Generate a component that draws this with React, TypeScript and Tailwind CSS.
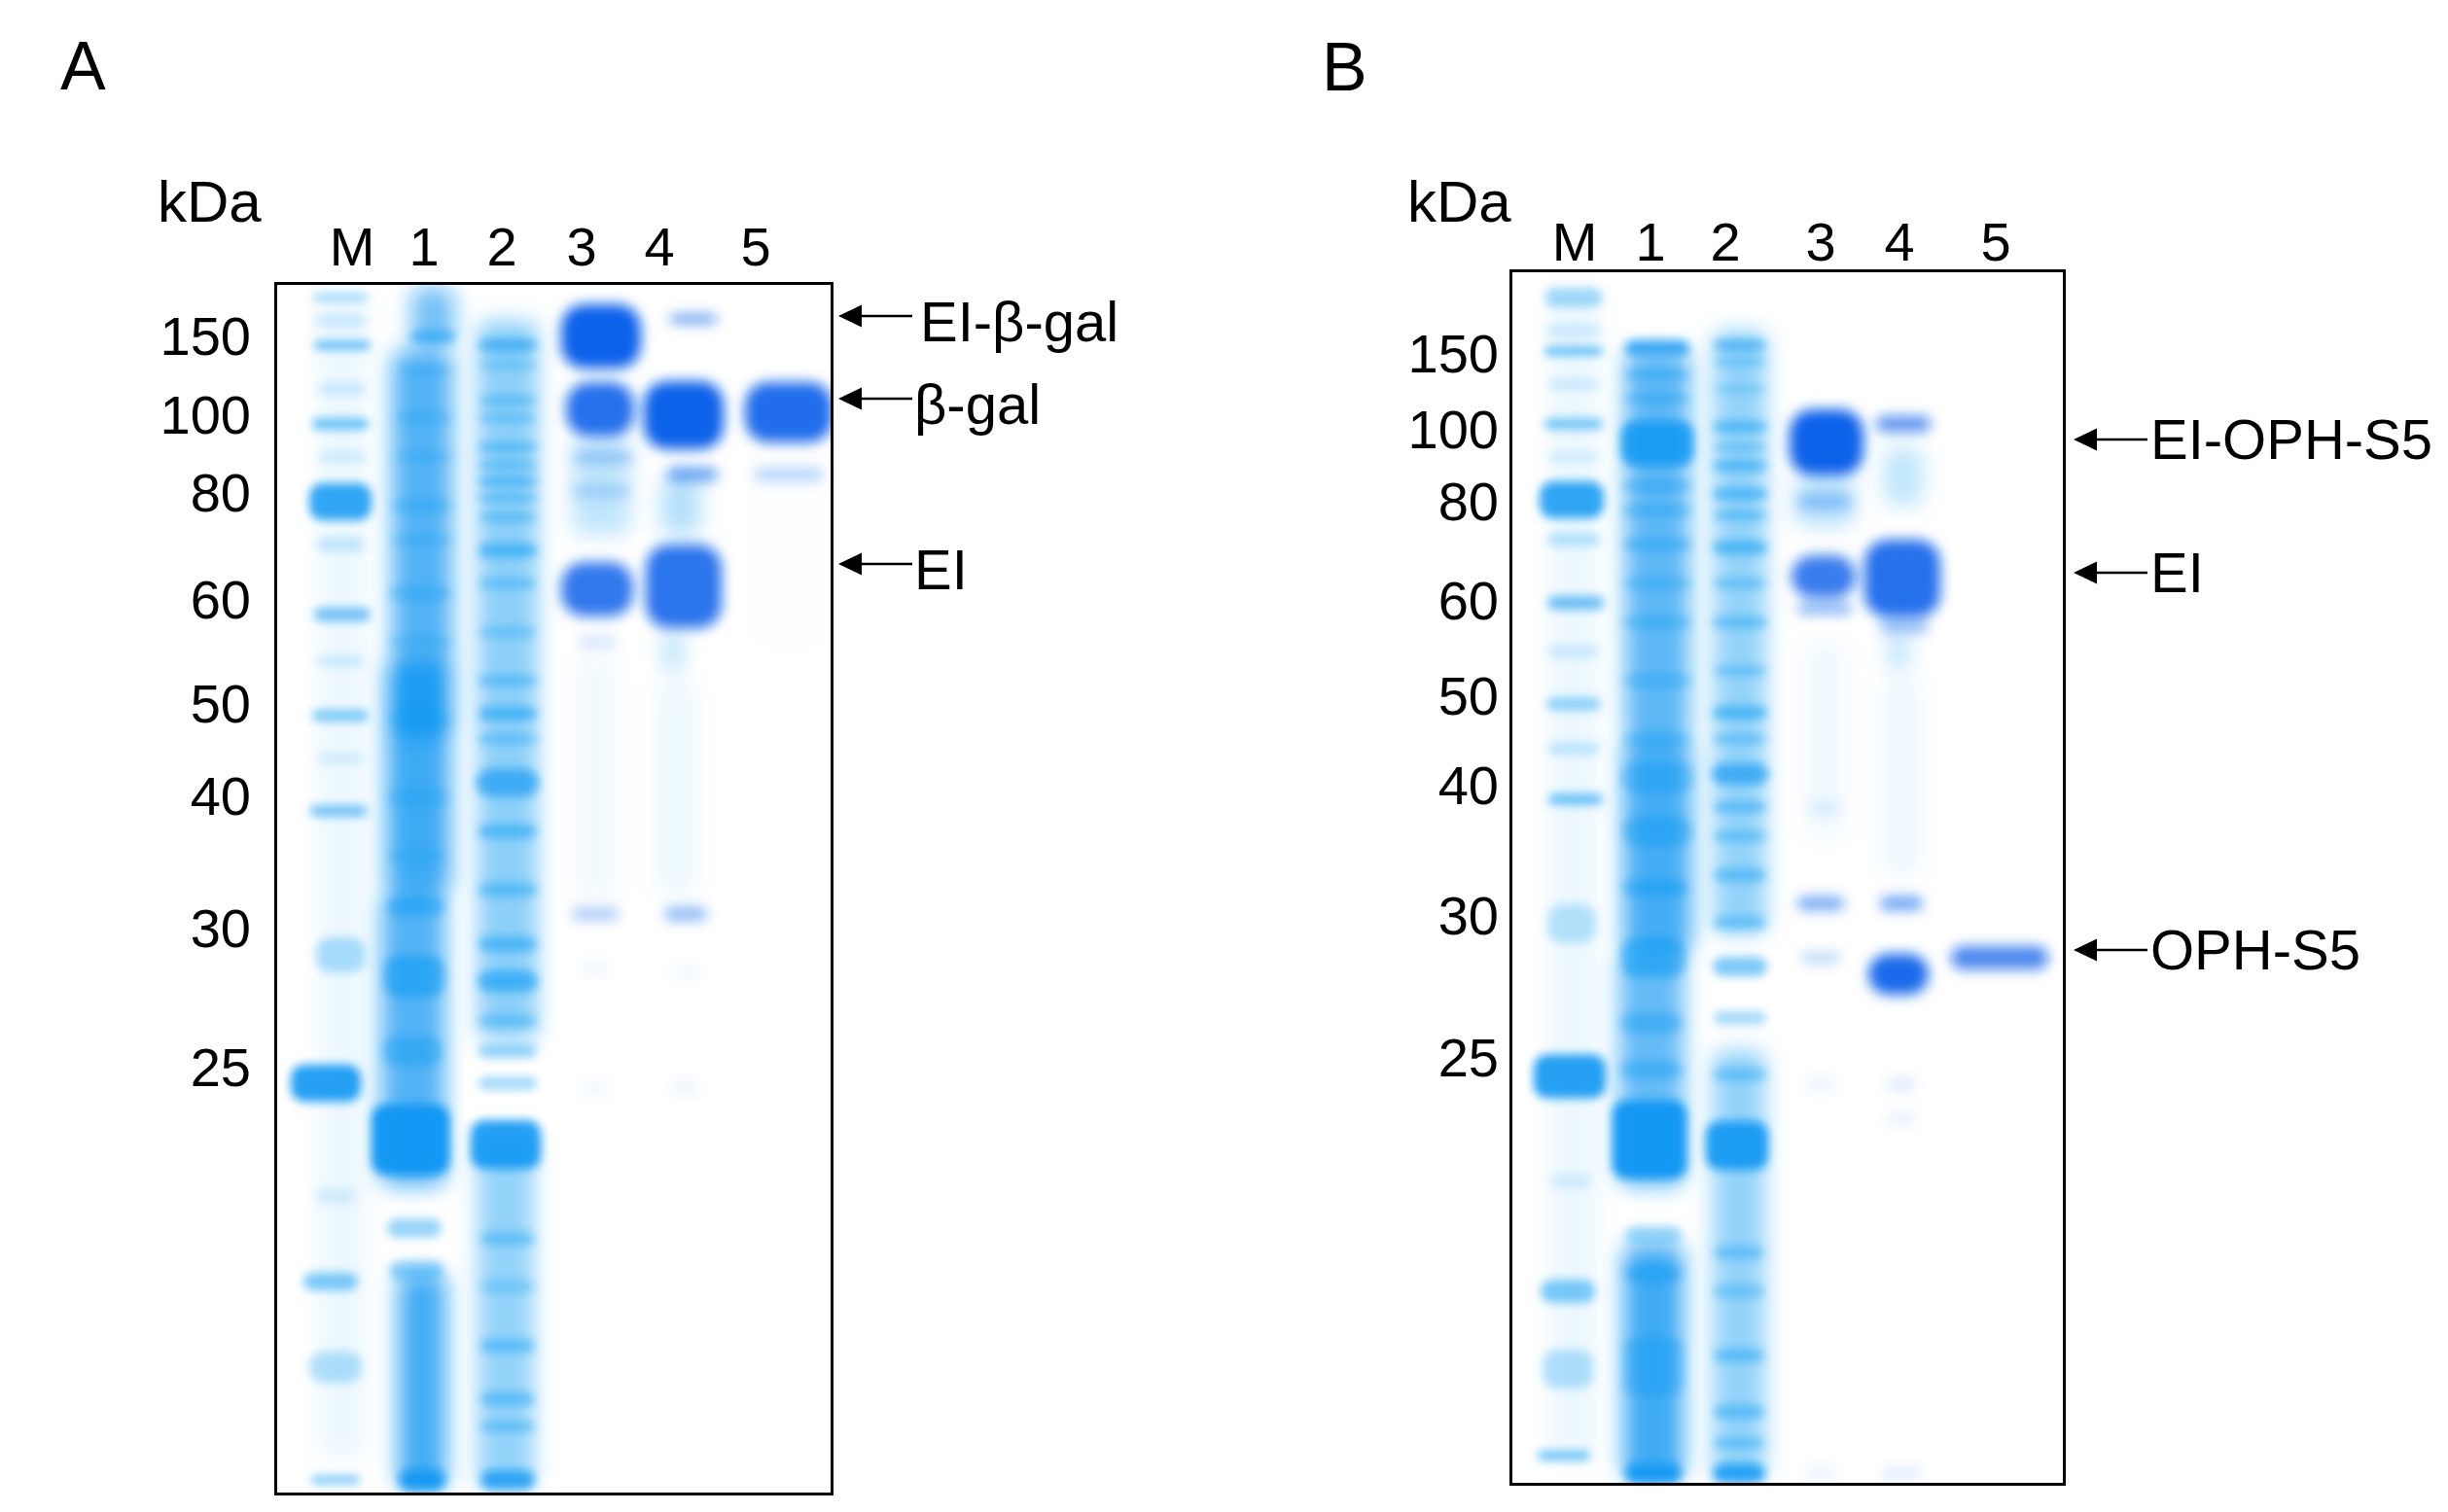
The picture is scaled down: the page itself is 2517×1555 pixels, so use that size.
import type { ReactNode } from 'react';

// [cx, cy, w, h, opacity] in page pixels
type Band = [number, number, number, number, number];

const LIGHT = '#0b96f2';
const DEEP = '#0a62ea';

type Tick = { label: string; top: number };
type Lane = { label: string; left: number };
type Arrow = { label: string; top: number; gap: string };

type GelData = {
  x: number;
  y: number;
  w: number;
  h: number;
  smear: Band[];
  light: Band[];
  deep: Band[];
};

const gelA: GelData = {
  x: 282,
  y: 290,
  w: 575,
  h: 1248,
  smear: [
    [352, 900, 50, 1200, 0.07],
    [445, 325, 44, 60, 0.6],
    [434, 560, 62, 400, 0.72],
    [430, 800, 66, 240, 0.8],
    [425, 1070, 66, 300, 0.72],
    [434, 1420, 50, 220, 0.78],
    [522, 700, 62, 740, 0.45],
    [520, 1350, 58, 360, 0.42],
    [618, 500, 60, 100, 0.25],
    [612, 800, 40, 250, 0.05],
    [700, 520, 40, 60, 0.3],
    [695, 810, 40, 220, 0.07],
    [692, 670, 20, 40, 0.3],
    [811, 560, 60, 200, 0.015],
  ],
  light: [
    [350, 306, 56, 8, 0.35], [350, 330, 54, 14, 0.15], [352, 355, 58, 10, 0.55], [352, 400, 50, 14, 0.15],
    [350, 436, 58, 12, 0.55], [352, 470, 50, 14, 0.12], [350, 516, 64, 38, 0.85], [350, 560, 50, 14, 0.2],
    [352, 632, 58, 13, 0.6], [350, 680, 50, 12, 0.15], [350, 736, 58, 13, 0.45], [350, 780, 50, 12, 0.12],
    [348, 834, 58, 11, 0.6], [350, 982, 50, 36, 0.3], [335, 1114, 72, 38, 0.9], [345, 1230, 44, 16, 0.12],
    [340, 1318, 56, 18, 0.5], [345, 1406, 54, 32, 0.28], [345, 1522, 50, 9, 0.5],

    [445, 346, 46, 14, 0.5], [440, 380, 50, 10, 0.2], [436, 430, 58, 14, 0.2], [436, 470, 60, 10, 0.2],
    [434, 520, 62, 14, 0.25], [434, 555, 62, 12, 0.2], [432, 610, 64, 16, 0.25], [432, 660, 64, 14, 0.2],
    [432, 740, 64, 20, 0.2], [430, 820, 64, 20, 0.2], [430, 880, 60, 12, 0.2], [428, 932, 60, 20, 0.4],
    [426, 1004, 62, 42, 0.5], [424, 1081, 62, 30, 0.35], [422, 1172, 80, 72, 0.95], [426, 1263, 56, 20, 0.4],
    [428, 1307, 56, 20, 0.4], [434, 1522, 48, 22, 0.9],

    [522, 355, 58, 12, 0.6], [522, 375, 56, 8, 0.3], [522, 412, 58, 10, 0.35], [522, 430, 58, 8, 0.35],
    [522, 460, 60, 10, 0.4], [522, 478, 60, 8, 0.4], [522, 495, 60, 10, 0.45], [522, 512, 60, 8, 0.4],
    [522, 532, 58, 10, 0.35], [522, 566, 60, 14, 0.5], [522, 600, 58, 10, 0.35], [522, 650, 58, 10, 0.3],
    [522, 700, 60, 12, 0.35], [522, 734, 60, 14, 0.5], [522, 760, 60, 10, 0.35], [522, 805, 64, 28, 0.65],
    [522, 855, 60, 14, 0.45], [522, 915, 60, 14, 0.4], [522, 971, 60, 16, 0.45], [522, 1009, 62, 22, 0.55],
    [522, 1050, 60, 12, 0.35], [522, 1081, 60, 14, 0.4], [522, 1114, 60, 14, 0.35], [520, 1177, 72, 50, 0.9],
    [522, 1274, 56, 14, 0.35], [522, 1323, 56, 14, 0.25], [522, 1384, 56, 14, 0.4], [522, 1439, 56, 14, 0.4],
    [522, 1467, 56, 12, 0.35], [522, 1522, 56, 20, 0.8],
  ],
  deep: [
    [618, 346, 82, 66, 1], [617, 421, 70, 56, 0.9], [620, 470, 60, 12, 0.3], [618, 505, 60, 10, 0.25],
    [614, 606, 74, 56, 0.85], [614, 660, 40, 14, 0.15], [612, 940, 48, 12, 0.35], [612, 995, 30, 10, 0.08],
    [612, 1119, 30, 10, 0.08],

    [713, 328, 48, 9, 0.65], [703, 427, 82, 70, 1], [712, 488, 52, 14, 0.6], [703, 603, 78, 86, 0.88],
    [705, 940, 44, 14, 0.45], [705, 1000, 26, 10, 0.08], [705, 1119, 26, 10, 0.1],

    [811, 424, 90, 62, 0.92], [811, 488, 70, 12, 0.3],
  ],
};

const gelB: GelData = {
  x: 1552,
  y: 277,
  w: 572,
  h: 1251,
  smear: [
    [1618, 900, 50, 1200, 0.07],
    [1704, 560, 66, 400, 0.68],
    [1704, 870, 70, 220, 0.78],
    [1698, 1100, 66, 240, 0.65],
    [1700, 1400, 62, 240, 0.8],
    [1789, 650, 54, 620, 0.42],
    [1788, 1300, 54, 440, 0.42],
    [1876, 515, 60, 50, 0.3],
    [1876, 760, 40, 200, 0.06],
    [1957, 490, 40, 60, 0.25],
    [1952, 670, 20, 40, 0.3],
    [1955, 800, 40, 200, 0.07],
  ],
  light: [
    [1618, 306, 60, 20, 0.35], [1618, 340, 56, 14, 0.15], [1618, 361, 60, 10, 0.55], [1618, 395, 54, 12, 0.15],
    [1618, 436, 60, 12, 0.5], [1618, 470, 54, 12, 0.12], [1616, 514, 66, 38, 0.85], [1618, 555, 54, 14, 0.25],
    [1620, 620, 58, 14, 0.6], [1618, 670, 54, 14, 0.15], [1618, 724, 56, 14, 0.4], [1618, 770, 54, 14, 0.2],
    [1620, 822, 56, 12, 0.55], [1616, 950, 50, 40, 0.25], [1614, 1107, 74, 45, 0.9], [1615, 1215, 44, 16, 0.12],
    [1612, 1328, 56, 24, 0.5], [1612, 1408, 52, 40, 0.28], [1608, 1497, 54, 10, 0.55],

    [1704, 358, 66, 16, 0.75], [1704, 385, 66, 10, 0.3], [1704, 410, 66, 10, 0.3], [1704, 456, 74, 46, 0.85],
    [1704, 500, 70, 12, 0.3], [1704, 525, 70, 12, 0.3], [1704, 560, 70, 14, 0.3], [1704, 600, 70, 14, 0.25],
    [1704, 640, 70, 16, 0.25], [1704, 700, 70, 16, 0.25], [1704, 760, 70, 16, 0.25], [1704, 800, 74, 30, 0.3],
    [1704, 855, 72, 30, 0.35], [1702, 913, 66, 16, 0.4], [1700, 985, 66, 40, 0.5], [1698, 1052, 64, 20, 0.35],
    [1698, 1100, 64, 18, 0.35], [1696, 1172, 76, 80, 0.95], [1700, 1270, 58, 18, 0.35], [1700, 1310, 58, 18, 0.35],
    [1700, 1405, 62, 60, 0.3], [1700, 1515, 58, 22, 0.9],

    [1789, 355, 52, 10, 0.6], [1789, 372, 52, 8, 0.35], [1789, 400, 52, 8, 0.25], [1789, 439, 56, 12, 0.45],
    [1789, 460, 54, 8, 0.35], [1789, 479, 56, 12, 0.45], [1789, 508, 56, 12, 0.5], [1789, 530, 54, 10, 0.4],
    [1789, 563, 56, 14, 0.5], [1789, 600, 54, 10, 0.35], [1789, 640, 56, 12, 0.4], [1789, 690, 54, 10, 0.35],
    [1789, 733, 56, 14, 0.5], [1789, 760, 54, 10, 0.35], [1789, 796, 58, 22, 0.65], [1789, 830, 54, 12, 0.4],
    [1789, 860, 54, 12, 0.35], [1789, 900, 54, 14, 0.4], [1789, 949, 54, 14, 0.4], [1789, 994, 56, 20, 0.5],
    [1789, 1047, 54, 14, 0.35], [1789, 1105, 54, 14, 0.35], [1786, 1178, 64, 50, 0.9], [1788, 1288, 52, 14, 0.35],
    [1788, 1328, 52, 14, 0.3], [1788, 1394, 52, 14, 0.4], [1788, 1452, 52, 14, 0.4], [1788, 1484, 52, 12, 0.35],
    [1788, 1515, 54, 20, 0.85],
  ],
  deep: [
    [1878, 455, 76, 68, 1], [1876, 516, 56, 14, 0.3], [1875, 593, 66, 44, 0.82], [1876, 626, 56, 10, 0.55],
    [1876, 831, 30, 10, 0.15], [1872, 929, 48, 14, 0.55], [1872, 985, 40, 12, 0.25], [1872, 1115, 30, 10, 0.1],
    [1872, 1515, 30, 10, 0.1],

    [1957, 436, 56, 16, 0.7], [1956, 595, 78, 80, 0.9], [1958, 645, 50, 10, 0.5], [1955, 929, 44, 14, 0.6],
    [1952, 1002, 62, 42, 0.95], [1955, 1115, 30, 12, 0.15], [1955, 1150, 30, 12, 0.1], [1955, 1515, 40, 10, 0.15],

    [2056, 985, 100, 24, 0.75],
  ],
};

const rects = (list: Band[], fill: string, round: number) =>
  list.map(([cx, cy, w, h, o], i) => (
    <rect
      key={i}
      x={cx - w / 2}
      y={cy - h / 2}
      width={w}
      height={h}
      rx={Math.min(h / 2, round)}
      fill={fill}
      opacity={o}
    />
  ));

function Gel({ id, g }: { id: string; g: GelData }) {
  const ix = g.x + 3;
  const iy = g.y + 3;
  const iw = g.w - 6;
  const ih = g.h - 6;
  const region = { x: ix - 60, y: iy - 60, width: iw + 120, height: ih + 120 };
  return (
    <div className="h-full w-full overflow-hidden border-[3px] border-black bg-white">
      <svg width={iw} height={ih} viewBox={`${ix} ${iy} ${iw} ${ih}`} className="block">
        <defs>
          <filter id={`${id}-soft`} filterUnits="userSpaceOnUse" {...region}>
            <feGaussianBlur stdDeviation="11" />
          </filter>
          <filter id={`${id}-band`} filterUnits="userSpaceOnUse" {...region}>
            <feGaussianBlur stdDeviation="5" />
          </filter>
          <filter id={`${id}-deep`} filterUnits="userSpaceOnUse" {...region}>
            <feGaussianBlur stdDeviation="6.5" />
          </filter>
        </defs>
        <g filter={`url(#${id}-soft)`}>{rects(g.smear, LIGHT, 12)}</g>
        <g filter={`url(#${id}-band)`}>{rects(g.light, LIGHT, 14)}</g>
        <g filter={`url(#${id}-deep)`}>{rects(g.deep, DEEP, 24)}</g>
      </svg>
    </div>
  );
}

function ArrowHead() {
  return (
    <svg width="76" height="58" viewBox="0 0 76 58" className="shrink-0">
      <line x1="20" y1="29" x2="76" y2="29" stroke="#000" strokeWidth="2.4" />
      <polygon points="0,29 24,17.5 24,40.5" fill="#000" />
    </svg>
  );
}

function Panel({
  letter,
  letterClass,
  rowClass,
  axisClass,
  kdaClass,
  gelColClass,
  laneRowClass,
  gelHeight,
  arrowLeft,
  textClass,
  ticks,
  lanes,
  arrows,
  gel,
}: {
  letter: string;
  letterClass: string;
  rowClass: string;
  axisClass: string;
  kdaClass: string;
  gelColClass: string;
  laneRowClass: string;
  gelHeight: string;
  arrowLeft: string;
  textClass: string;
  ticks: Tick[];
  lanes: Lane[];
  arrows: Arrow[];
  gel: ReactNode;
}) {
  return (
    <div className="flex flex-col">
      <div className={`text-[70px] leading-none ${letterClass}`}>{letter}</div>
      <div className={`flex ${rowClass}`}>
        <div className={`relative shrink-0 ${axisClass}`}>
          <div className={`whitespace-nowrap text-[60px] leading-none ${kdaClass}`}>kDa</div>
          {ticks.map((t) => (
            <span
              key={t.label}
              className="absolute right-[2px] text-[56px] leading-none"
              style={{ top: t.top }}
            >
              {t.label}
            </span>
          ))}
        </div>
        <div className={`flex shrink-0 flex-col ${gelColClass}`}>
          <div className={`relative h-[56px] ${laneRowClass}`}>
            {lanes.map((l) => (
              <span
                key={l.label}
                className="absolute top-0 -translate-x-1/2 text-[56px] leading-none"
                style={{ left: l.left }}
              >
                {l.label}
              </span>
            ))}
          </div>
          <div className={gelHeight}>{gel}</div>
        </div>
        <div className="relative flex-1">
          {arrows.map((a) => (
            <div
              key={a.label}
              className={`absolute flex h-[58px] items-center whitespace-nowrap ${arrowLeft}`}
              style={{ top: a.top }}
            >
              <ArrowHead />
              <span className={`relative text-[58px] leading-none ${a.gap} ${textClass}`}>{a.label}</span>
            </div>
          ))}
        </div>
      </div>
    </div>
  );
}

export default function App() {
  return (
    <div className="flex h-[1555px] w-[2517px] overflow-hidden bg-white font-['Liberation_Sans',Arial,sans-serif] text-black">
      <div className="w-[1300px] shrink-0">
        <Panel
          letter="A"
          letterClass="pl-[62px] pt-[33px]"
          rowClass="mt-[75px]"
          axisClass="ml-[160px] w-[100px]"
          kdaClass="pl-[2px]"
          gelColClass="ml-[22px] w-[575px]"
          laneRowClass="mt-[48px] mb-[8px]"
          gelHeight="h-[1248px]"
          arrowLeft="left-[5px]"
          textClass="top-[6px]"
          ticks={[
            { label: '150', top: 140 },
            { label: '100', top: 221 },
            { label: '80', top: 301 },
            { label: '60', top: 411 },
            { label: '50', top: 518 },
            { label: '40', top: 613 },
            { label: '30', top: 749 },
            { label: '25', top: 892 },
          ]}
          lanes={[
            { label: 'M', left: 80 },
            { label: '1', left: 154 },
            { label: '2', left: 234 },
            { label: '3', left: 316 },
            { label: '4', left: 396 },
            { label: '5', left: 495 },
          ]}
          arrows={[
            { label: 'EI-β-gal', top: 118, gap: 'ml-[8px]' },
            { label: 'β-gal', top: 203, gap: 'ml-[2px]' },
            { label: 'EI', top: 373, gap: 'ml-[2px]' },
          ]}
          gel={<Gel id="ga" g={gelA} />}
        />
      </div>
      <div className="flex-1">
        <Panel
          letter="B"
          letterClass="pl-[59px] pt-[34px]"
          rowClass="mt-[74px]"
          axisClass="ml-[147px] w-[96px]"
          kdaClass="pl-0"
          gelColClass="ml-[9px] w-[572px]"
          laneRowClass="mt-[43px]"
          gelHeight="h-[1251px]"
          arrowLeft="left-[8px]"
          textClass="top-0"
          ticks={[
            { label: '150', top: 158 },
            { label: '100', top: 236 },
            { label: '80', top: 310 },
            { label: '60', top: 412 },
            { label: '50', top: 510 },
            { label: '40', top: 602 },
            { label: '30', top: 736 },
            { label: '25', top: 882 },
          ]}
          lanes={[
            { label: 'M', left: 67 },
            { label: '1', left: 145 },
            { label: '2', left: 222 },
            { label: '3', left: 320 },
            { label: '4', left: 401 },
            { label: '5', left: 500 },
          ]}
          arrows={[
            { label: 'EI-OPH-S5', top: 245, gap: 'ml-[3px]' },
            { label: 'EI', top: 382, gap: 'ml-[3px]' },
            { label: 'OPH-S5', top: 770, gap: 'ml-[3px]' },
          ]}
          gel={<Gel id="gb" g={gelB} />}
        />
      </div>
    </div>
  );
}
